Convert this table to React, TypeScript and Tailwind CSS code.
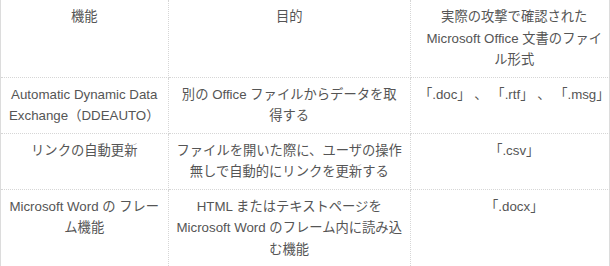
import React from "react";

type Row = { a: React.ReactNode; b: React.ReactNode; c: React.ReactNode };

const rows: Row[] = [
  {
    a: (<>Automatic Dynamic Data<br />Exchange（DDEAUTO）</>),
    b: (<>別の Office ファイルからデータを取<br />得する</>),
    c: <>「.doc」 、 「.rtf」 、 「.msg」</>,
  },
  {
    a: <>リンクの自動更新</>,
    b: (<>ファイルを開いた際に、ユーザの操作<br />無しで自動的にリンクを更新する</>),
    c: <>「.csv」</>,
  },
  {
    a: (<>Microsoft Word の フレー<br />ム機能</>),
    b: (<>HTML またはテキストページを<br />Microsoft Word のフレーム内に読み込<br />む機能</>),
    c: <>「.docx」</>,
  },
];

const cell =
  "px-2 py-[6px] text-center align-top whitespace-pre border-[#d6d6d6] border-dotted";

export default function App() {
  return (
    <div className="w-[610px] h-[266px] bg-white">
      <div className="w-[610px] border-l border-r border-b border-solid border-[#dcdcdc]">
        <table
          className="w-full border-collapse text-[13.3px] leading-[21.5px] text-[#555555]"
          style={{ fontFamily: '"Liberation Sans", "Noto Sans CJK JP", sans-serif' }}
        >
          <colgroup>
            <col className="w-[168px]" />
            <col className="w-[244px]" />
            <col className="w-[196px]" />
          </colgroup>
          <thead>
            <tr className="h-[76px]">
              <th className={`${cell} font-normal border-b border-r`}>機能</th>
              <th className={`${cell} font-normal border-b border-r`}>目的</th>
              <th className={`${cell} font-normal border-b`}>
                実際の攻撃で確認された
                <br />
                Microsoft Office 文書のファイ
                <br />
                ル形式
              </th>
            </tr>
          </thead>
          <tbody>
            {rows.map((r, i) => {
              const last = i === rows.length - 1;
              const rowBorder = last ? "" : "border-b";
              return (
                <tr key={i} className={last ? "h-[76px]" : "h-[56px]"}>
                  <td className={`${cell} ${rowBorder} border-r`}>{r.a}</td>
                  <td className={`${cell} ${rowBorder} border-r`}>{r.b}</td>
                  <td className={`${cell} ${rowBorder}`}>{r.c}</td>
                </tr>
              );
            })}
          </tbody>
        </table>
      </div>
    </div>
  );
}
